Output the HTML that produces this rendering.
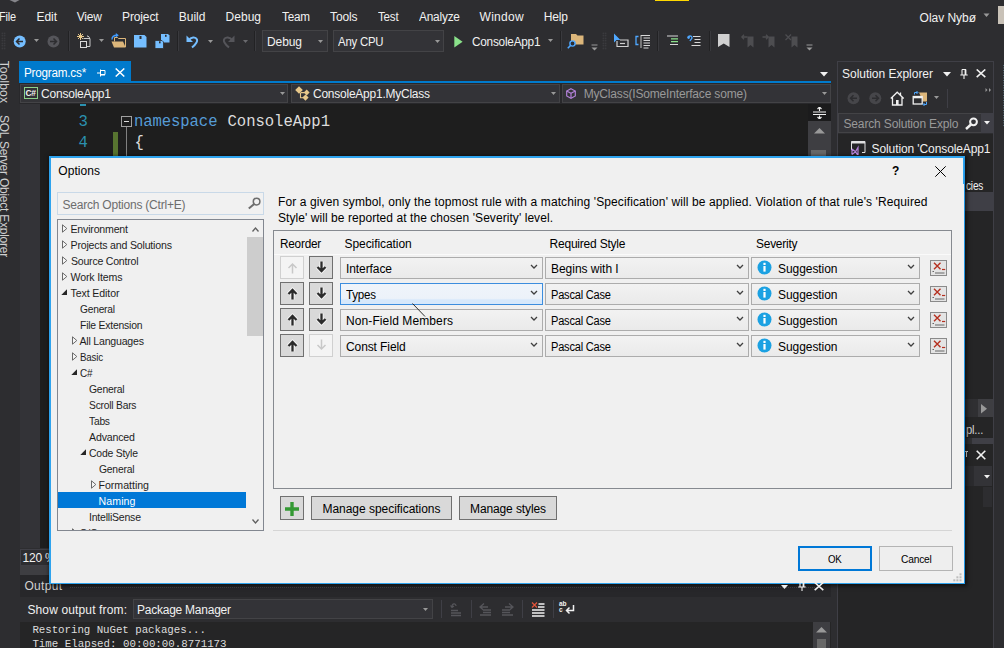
<!DOCTYPE html><html><head><meta charset="utf-8"><title>Options</title><style>
html,body{margin:0;padding:0;}
body{width:1004px;height:648px;overflow:hidden;background:#2D2D30;position:relative;font-family:"Liberation Sans",sans-serif;font-size:12px;}
div,span.t,svg{position:absolute;box-sizing:border-box;}
span.t{white-space:pre;}

</style></head><body>
<div style="left:655px;top:0px;width:34px;height:1px;background:#FFD800;"></div>
<svg style="left:9px;top:0px" width="11" height="3" viewBox="0 0 11 3"><path d="M0.500 0h10l-4.500 2.500z" fill="#85858A"/></svg>
<span class="t" style="left:-1px;top:9.00px;font-size:12px;line-height:16px;color:#F1F1F1;letter-spacing:-0.220px;transform:scaleX(0.9099);transform-origin:0 50%;">File</span>
<span class="t" style="left:36.6px;top:9.00px;font-size:12px;line-height:16px;color:#F1F1F1;letter-spacing:-0.096px;">Edit</span>
<span class="t" style="left:76.7px;top:9.00px;font-size:12px;line-height:16px;color:#F1F1F1;letter-spacing:-0.166px;">View</span>
<span class="t" style="left:122px;top:9.00px;font-size:12px;line-height:16px;color:#F1F1F1;letter-spacing:-0.127px;">Project</span>
<span class="t" style="left:178.8px;top:9.00px;font-size:12px;line-height:16px;color:#F1F1F1;letter-spacing:-0.022px;">Build</span>
<span class="t" style="left:225.6px;top:9.00px;font-size:12px;line-height:16px;color:#F1F1F1;letter-spacing:0.006px;">Debug</span>
<span class="t" style="left:282px;top:9.00px;font-size:12px;line-height:16px;color:#F1F1F1;letter-spacing:-0.220px;transform:scaleX(0.9762);transform-origin:0 50%;">Team</span>
<span class="t" style="left:330px;top:9.00px;font-size:12px;line-height:16px;color:#F1F1F1;letter-spacing:-0.104px;">Tools</span>
<span class="t" style="left:378px;top:9.00px;font-size:12px;line-height:16px;color:#F1F1F1;letter-spacing:-0.220px;transform:scaleX(0.9646);transform-origin:0 50%;">Test</span>
<span class="t" style="left:419px;top:9.00px;font-size:12px;line-height:16px;color:#F1F1F1;letter-spacing:-0.220px;transform:scaleX(0.9907);transform-origin:0 50%;">Analyze</span>
<span class="t" style="left:479.5px;top:9.00px;font-size:12px;line-height:16px;color:#F1F1F1;letter-spacing:0.303px;">Window</span>
<span class="t" style="left:543.8px;top:9.00px;font-size:12px;line-height:16px;color:#F1F1F1;letter-spacing:-0.162px;">Help</span>
<span class="t" style="left:919.6px;top:9.70px;font-size:12px;line-height:16px;color:#F1F1F1;letter-spacing:-0.036px;">Olav Nybø</span>
<svg style="left:983px;top:13px" width="8" height="5"><path d="M0.5 0.5h6l-3 3.5z" fill="#999"/></svg>
<div style="left:998px;top:6px;width:6px;height:18px;background:#C9C2B8;"></div>
<div style="left:262px;top:30px;width:66px;height:22px;background:#333337;border:1px solid #434346;"></div>
<span class="t" style="left:267px;top:33.50px;font-size:12px;line-height:16px;color:#F1F1F1;letter-spacing:-0.094px;">Debug</span>
<div style="left:333px;top:30px;width:111px;height:22px;background:#333337;border:1px solid #434346;"></div>
<span class="t" style="left:338px;top:33.50px;font-size:12px;line-height:16px;color:#F1F1F1;letter-spacing:-0.220px;transform:scaleX(0.9492);transform-origin:0 50%;">Any CPU</span>
<span class="t" style="left:471.5px;top:33.50px;font-size:12px;line-height:16px;color:#F1F1F1;letter-spacing:-0.220px;transform:scaleX(0.9805);transform-origin:0 50%;">ConsoleApp1</span>
<div style="left:20px;top:0px;width:400px;height:20px;transform-origin:0 0;transform:rotate(90deg)">
<span class="t" style="left:60.7px;top:8.40px;font-size:12px;line-height:16px;color:#D0D0D0;letter-spacing:0.138px;">Toolbox</span>
<span class="t" style="left:115.3px;top:8.40px;font-size:12px;line-height:16px;color:#D0D0D0;letter-spacing:-0.220px;transform:scaleX(0.9959);transform-origin:0 50%;">SQL Server Object Explorer</span>
</div>
<div style="left:19px;top:61px;width:112px;height:20px;background:#007ACC;"></div>
<div style="left:19px;top:81px;width:812px;height:2px;background:#007ACC;"></div>
<span class="t" style="left:23.8px;top:64.90px;font-size:12px;line-height:16px;color:#FFFFFF;letter-spacing:-0.220px;transform:scaleX(0.9744);transform-origin:0 50%;">Program.cs*</span>
<div style="left:19px;top:83px;width:812px;height:21px;background:#28282B;"></div>
<div style="left:20px;top:84px;width:268px;height:19px;background:#333337;border:1px solid #434346;"></div>
<div style="left:291px;top:84px;width:269px;height:19px;background:#333337;border:1px solid #434346;"></div>
<div style="left:562px;top:84px;width:269px;height:19px;background:#333337;border:1px solid #434346;"></div>
<span class="t" style="left:41px;top:86.00px;font-size:12px;line-height:16px;color:#F1F1F1;letter-spacing:-0.206px;">ConsoleApp1</span>
<span class="t" style="left:312.5px;top:86.00px;font-size:12px;line-height:16px;color:#F1F1F1;letter-spacing:-0.220px;transform:scaleX(0.9963);transform-origin:0 50%;">ConsoleApp1.MyClass</span>
<span class="t" style="left:583.7px;top:86.00px;font-size:12px;line-height:16px;color:#999999;letter-spacing:-0.176px;">MyClass(ISomeInterface some)</span>
<div style="left:20px;top:104px;width:811px;height:444px;background:#1E1E1E;"></div>
<div style="left:20px;top:104px;width:20px;height:444px;background:#333337;"></div>
<div style="left:112.5px;top:132px;width:5px;height:24px;background:#577430;"></div>
<span class="t" style="left:78.5px;top:112.30px;font-size:15.6px;line-height:20px;color:#2B91AF;font-family:'Liberation Mono', monospace;">3</span>
<span class="t" style="left:78.5px;top:133.30px;font-size:15.6px;line-height:20px;color:#2B91AF;font-family:'Liberation Mono', monospace;">4</span>
<span class="t" style="left:134px;top:112.30px;font-size:15.6px;line-height:20px;color:#569CD6;font-family:'Liberation Mono', monospace;letter-spacing:-0.092px;">namespace</span>
<span class="t" style="left:227.5px;top:112.30px;font-size:15.6px;line-height:20px;color:#DCDCDC;font-family:'Liberation Mono', monospace;letter-spacing:-0.044px;">ConsoleApp1</span>
<span class="t" style="left:134.5px;top:133.30px;font-size:15.6px;line-height:20px;color:#DCDCDC;font-family:'Liberation Mono', monospace;">{</span>
<svg style="left:121px;top:116px" width="12" height="42"><rect x="0.5" y="0.5" width="10" height="10" fill="#1E1E1E" stroke="#A0A0A0"/><path d="M3 5.5h5" stroke="#DCDCDC"/><path d="M5.5 11v31" stroke="#808080"/></svg>
<div style="left:808px;top:104px;width:23px;height:444px;background:#3E3E42;"></div>
<div style="left:808px;top:104px;width:23px;height:17px;background:#1B1B1C;"></div>
<div style="left:811px;top:150px;width:15px;height:10px;background:#686868;"></div>
<div style="left:20px;top:548px;width:811px;height:27px;background:#2D2D30;"></div>
<div style="left:20px;top:549px;width:30px;height:17px;background:#2D2D30;border:1px solid #3F3F46;"></div>
<span class="t" style="left:22.5px;top:549.80px;font-size:12px;line-height:16px;color:#F1F1F1;letter-spacing:-0.2px;">120 %</span>
<div style="left:20px;top:566px;width:811px;height:9px;background:#3E3E42;"></div>
<div style="left:20px;top:575px;width:811px;height:22px;background:#27272A;"></div>
<span class="t" style="left:24.4px;top:578.00px;font-size:12px;line-height:16px;color:#D0D0D0;letter-spacing:0.314px;">Output</span>
<div style="left:70px;top:587px;width:745px;height:1px;border-top:1px dotted #46464A;"></div>
<span class="t" style="left:27.4px;top:601.60px;font-size:12px;line-height:16px;color:#F1F1F1;letter-spacing:0.138px;">Show output from:</span>
<div style="left:133px;top:599px;width:300px;height:20px;background:#333337;border:1px solid #434346;"></div>
<span class="t" style="left:137px;top:601.60px;font-size:12px;line-height:16px;color:#F1F1F1;letter-spacing:-0.220px;transform:scaleX(0.9965);transform-origin:0 50%;">Package Manager</span>
<div style="left:20px;top:622px;width:811px;height:26px;background:#252526;"></div>
<span class="t" style="left:32.4px;top:622.50px;font-size:10.8px;line-height:14px;color:#DCDCDC;font-family:'Liberation Mono', monospace;letter-spacing:-0.052px;">Restoring NuGet packages...</span>
<span class="t" style="left:32.4px;top:636.70px;font-size:10.8px;line-height:14px;color:#DCDCDC;font-family:'Liberation Mono', monospace;letter-spacing:-0.007px;">Time Elapsed: 00:00:00.8771173</span>
<div style="left:813px;top:622px;width:17px;height:26px;background:#3E3E42;"></div>
<div style="left:817px;top:639px;width:9px;height:9px;background:#686868;"></div>
<div style="left:837px;top:61px;width:157px;height:600px;background:#252526;border:1px solid #3F3F46;"></div>
<div style="left:838px;top:62px;width:155px;height:72px;background:#2D2D30;"></div>
<span class="t" style="left:842px;top:66.00px;font-size:12px;line-height:16px;color:#F1F1F1;letter-spacing:-0.024px;">Solution Explorer</span>
<div style="left:838px;top:113px;width:155px;height:20px;background:#333337;border:1px solid #434346;"></div>
<div style="left:981px;top:113px;width:12px;height:20px;background:#3F3F46;"></div>
<span class="t" style="left:843.5px;top:115.80px;font-size:12px;line-height:16px;color:#999999;letter-spacing:-0.154px;">Search Solution Explo</span>
<span class="t" style="left:871.6px;top:141.00px;font-size:12px;line-height:16px;color:#F1F1F1;letter-spacing:-0.105px;width:122px;overflow:hidden;">Solution &#x27;ConsoleApp1</span>
<span class="t" style="left:965.7px;top:177.80px;font-size:12px;line-height:16px;color:#F1F1F1;letter-spacing:-0.220px;transform:scaleX(0.8364);transform-origin:0 50%;">cies</span>
<div style="left:964px;top:192px;width:29px;height:19px;background:#3F3F46;"></div>
<div style="left:964px;top:399px;width:14px;height:18px;background:#2F2F32;"></div>
<div style="left:978px;top:399px;width:15px;height:18px;background:#3E3E42;"></div>
<span class="t" style="left:966.4px;top:421.50px;font-size:12px;line-height:16px;color:#D0D0D0;letter-spacing:-0.220px;transform:scaleX(0.9370);transform-origin:0 50%;">pl...</span>
<div style="left:964px;top:438px;width:8px;height:6px;background:#303033;"></div>
<div style="left:972px;top:438px;width:21px;height:6px;background:#3F3F46;"></div>
<div style="left:964px;top:466px;width:10px;height:20px;background:#2B2B2E;"></div>
<div style="left:974px;top:466px;width:18px;height:20px;background:#333337;"></div>
<div style="left:983px;top:487px;width:9px;height:20px;background:#2D2D30;"></div>
<div style="left:965px;top:451px;width:3px;height:1px;background:#F1F1F1;"></div>
<div style="left:966px;top:451px;width:1px;height:6px;background:#F1F1F1;"></div>
<div style="left:49px;top:156px;width:916px;height:428px;background:#F0F0F0;border:2px solid #2EA3EE;border-right-width:1px;border-bottom-width:1px;border-right-color:#2496E3;box-shadow:1px 1px 4px 1px rgba(0,0,0,0.6)"></div>
<div style="left:963px;top:156px;width:1px;height:28px;background:#2EA3EE;"></div>
<span class="t" style="left:58.25px;top:162.50px;font-size:12px;line-height:16px;color:#000;letter-spacing:0.065px;">Options</span>
<span class="t" style="left:892px;top:163.00px;font-size:12px;line-height:16px;color:#000;font-weight:bold;">?</span>
<div style="left:57px;top:192px;width:207px;height:23px;background:#F1F1F1;border:1px solid #C9D9E8;"></div>
<span class="t" style="left:62.5px;top:196.50px;font-size:12px;line-height:16px;color:#6D6D6D;letter-spacing:-0.214px;">Search Options (Ctrl+E)</span>
<div style="left:57px;top:219px;width:207px;height:312px;background:#F0F0F0;border:1px solid #828790;"></div>
<div style="left:247px;top:220px;width:16px;height:310px;background:#F0F0F0;"></div>
<div style="left:247px;top:237px;width:16px;height:99px;background:#CDCDCD;"></div>
<div style="left:58px;top:492px;width:188px;height:16px;background:#0078D7;"></div>
<span class="t" style="left:70.5px;top:221.00px;font-size:10.6px;line-height:16px;color:#1E1E1E;letter-spacing:-0.198px;">Environment</span>
<span class="t" style="left:70.5px;top:237.00px;font-size:10.6px;line-height:16px;color:#1E1E1E;letter-spacing:-0.187px;">Projects and Solutions</span>
<span class="t" style="left:70.5px;top:253.00px;font-size:10.6px;line-height:16px;color:#1E1E1E;letter-spacing:-0.220px;transform:scaleX(0.9954);transform-origin:0 50%;">Source Control</span>
<span class="t" style="left:70.5px;top:269.00px;font-size:10.6px;line-height:16px;color:#1E1E1E;letter-spacing:-0.153px;">Work Items</span>
<span class="t" style="left:70.5px;top:285.00px;font-size:10.6px;line-height:16px;color:#1E1E1E;letter-spacing:-0.105px;">Text Editor</span>
<span class="t" style="left:79.5px;top:301.00px;font-size:10.6px;line-height:16px;color:#1E1E1E;letter-spacing:-0.220px;transform:scaleX(0.9620);transform-origin:0 50%;">General</span>
<span class="t" style="left:79.5px;top:317.00px;font-size:10.6px;line-height:16px;color:#1E1E1E;letter-spacing:-0.220px;transform:scaleX(0.9814);transform-origin:0 50%;">File Extension</span>
<span class="t" style="left:79.5px;top:333.00px;font-size:10.6px;line-height:16px;color:#1E1E1E;letter-spacing:-0.220px;">All Languages</span>
<span class="t" style="left:79.5px;top:349.00px;font-size:10.6px;line-height:16px;color:#1E1E1E;letter-spacing:-0.220px;transform:scaleX(0.9190);transform-origin:0 50%;">Basic</span>
<span class="t" style="left:79.5px;top:365.00px;font-size:10.6px;line-height:16px;color:#1E1E1E;letter-spacing:-0.220px;transform:scaleX(0.9380);transform-origin:0 50%;">C#</span>
<span class="t" style="left:89px;top:381.00px;font-size:10.6px;line-height:16px;color:#1E1E1E;letter-spacing:-0.220px;transform:scaleX(0.9785);transform-origin:0 50%;">General</span>
<span class="t" style="left:89px;top:397.00px;font-size:10.6px;line-height:16px;color:#1E1E1E;letter-spacing:-0.220px;transform:scaleX(0.9690);transform-origin:0 50%;">Scroll Bars</span>
<span class="t" style="left:89px;top:413.00px;font-size:10.6px;line-height:16px;color:#1E1E1E;letter-spacing:-0.220px;transform:scaleX(0.9664);transform-origin:0 50%;">Tabs</span>
<span class="t" style="left:89px;top:429.00px;font-size:10.6px;line-height:16px;color:#1E1E1E;letter-spacing:-0.161px;">Advanced</span>
<span class="t" style="left:89px;top:445.00px;font-size:10.6px;line-height:16px;color:#1E1E1E;letter-spacing:-0.220px;transform:scaleX(0.9830);transform-origin:0 50%;">Code Style</span>
<span class="t" style="left:98.5px;top:461.00px;font-size:10.6px;line-height:16px;color:#1E1E1E;letter-spacing:-0.220px;transform:scaleX(0.9757);transform-origin:0 50%;">General</span>
<span class="t" style="left:98.5px;top:477.00px;font-size:10.6px;line-height:16px;color:#1E1E1E;letter-spacing:-0.016px;">Formatting</span>
<span class="t" style="left:98.5px;top:493.00px;font-size:10.6px;line-height:16px;color:#FFFFFF;letter-spacing:0.097px;">Naming</span>
<span class="t" style="left:89px;top:509.00px;font-size:10.6px;line-height:16px;color:#1E1E1E;letter-spacing:-0.220px;transform:scaleX(0.9931);transform-origin:0 50%;">IntelliSense</span>
<div style="left:58px;top:525px;width:189px;height:5px;overflow:hidden"><span class="t" style="left:21.5px;top:0px;font-size:10.6px;line-height:16px;color:#1E1E1E">C/C++</span></div>
<span class="t" style="left:278px;top:194.00px;font-size:12px;line-height:16px;color:#000;letter-spacing:0.109px;">For a given symbol, only the topmost rule with a matching &#x27;Specification&#x27; will be applied. Violation of that rule&#x27;s &#x27;Required</span>
<span class="t" style="left:278px;top:209.50px;font-size:12px;line-height:16px;color:#000;letter-spacing:0.061px;">Style&#x27; will be reported at the chosen &#x27;Severity&#x27; level.</span>
<div style="left:273px;top:230px;width:679px;height:259px;background:#F0F0F0;border:1px solid #868A90;"></div>
<div style="left:274px;top:253.5px;width:677px;height:1px;background:#FAFAFA;"></div>
<span class="t" style="left:279.5px;top:235.70px;font-size:12px;line-height:16px;color:#000;letter-spacing:-0.220px;transform:scaleX(0.9800);transform-origin:0 50%;">Reorder</span>
<span class="t" style="left:344.5px;top:235.70px;font-size:12px;line-height:16px;color:#000;letter-spacing:-0.071px;">Specification</span>
<span class="t" style="left:549.5px;top:235.70px;font-size:12px;line-height:16px;color:#000;letter-spacing:-0.209px;">Required Style</span>
<span class="t" style="left:755.5px;top:235.70px;font-size:12px;line-height:16px;color:#000;letter-spacing:-0.220px;transform:scaleX(0.9924);transform-origin:0 50%;">Severity</span>
<div style="left:280px;top:256px;width:24px;height:23px;background:#F4F4F4;border:1px solid #D0D0D0;"></div>
<svg style="left:285.5px;top:260.5px" width="13" height="15"><path d="M6.5 3v9.5M2.5 7l4-4 4 4" stroke="#C8C8C8" stroke-width="1.5" fill="none"/></svg>
<div style="left:309px;top:256px;width:24px;height:23px;background:#D9D9D9;border:1px solid #707070;"></div>
<svg style="left:314.5px;top:259.5px" width="13" height="15"><path d="M6.5 1.5v9.5M2.5 7l4 4 4-4" stroke="#F4F4F4" stroke-width="4.2" fill="none" stroke-linejoin="miter"/><path d="M6.5 1.5v9.5M2.5 7l4 4 4-4" stroke="#2B2B2B" stroke-width="2.3" fill="none"/></svg>
<div style="left:340px;top:257px;width:203px;height:22px;border:1px solid #ACACAC;background:linear-gradient(#F2F2F2,#EAEAEA);"></div>
<svg style="left:530px;top:264px" width="8" height="6"><path d="M1 1l3 3 3-3" stroke="#404040" stroke-width="1.3" fill="none"/></svg>
<div style="left:545px;top:257px;width:204px;height:22px;border:1px solid #ACACAC;background:linear-gradient(#F2F2F2,#EAEAEA);"></div>
<svg style="left:736px;top:264px" width="8" height="6"><path d="M1 1l3 3 3-3" stroke="#404040" stroke-width="1.3" fill="none"/></svg>
<div style="left:751px;top:257px;width:169px;height:22px;border:1px solid #ACACAC;background:linear-gradient(#F2F2F2,#EAEAEA);"></div>
<svg style="left:907px;top:264px" width="8" height="6"><path d="M1 1l3 3 3-3" stroke="#404040" stroke-width="1.3" fill="none"/></svg>
<span class="t" style="left:346px;top:260.70px;font-size:12px;line-height:16px;color:#000;letter-spacing:-0.088px;">Interface</span>
<span class="t" style="left:551px;top:260.70px;font-size:12px;line-height:16px;color:#000;letter-spacing:-0.029px;">Begins with I</span>
<span class="t" style="left:778px;top:260.70px;font-size:12px;line-height:16px;color:#000;letter-spacing:-0.061px;">Suggestion</span>
<svg style="left:757px;top:260px" width="15" height="15"><circle cx="7.5" cy="7.5" r="7" fill="#1BA1E2"/><rect x="6.4" y="6" width="2.2" height="5.6" fill="#fff"/><rect x="6.4" y="2.8" width="2.2" height="2.2" fill="#fff"/></svg>
<div style="left:930px;top:260px;width:17px;height:16px;background:#E4E4E4;border:1px solid #8A8A8A;"></div>
<svg style="left:931px;top:261px" width="15" height="14"><path d="M3 1.700l6.500 6.500M9.500 1.700l-6.500 6.500" stroke="#B5301F" stroke-width="1.400"/><path d="M11 8.500h3.200" stroke="#B5301F" stroke-width="1.200"/><path d="M4 12h9.500M1.500 10.500h1.500" stroke="#666" stroke-width="1.100"/></svg>
<div style="left:280px;top:282px;width:24px;height:23px;background:#D9D9D9;border:1px solid #707070;"></div>
<svg style="left:285.5px;top:286.5px" width="13" height="15"><path d="M6.5 3v9.5M2.5 7l4-4 4 4" stroke="#F4F4F4" stroke-width="4.2" fill="none" stroke-linejoin="miter"/><path d="M6.5 3v9.5M2.5 7l4-4 4 4" stroke="#2B2B2B" stroke-width="2.3" fill="none"/></svg>
<div style="left:309px;top:282px;width:24px;height:23px;background:#D9D9D9;border:1px solid #707070;"></div>
<svg style="left:314.5px;top:285.5px" width="13" height="15"><path d="M6.5 1.5v9.5M2.5 7l4 4 4-4" stroke="#F4F4F4" stroke-width="4.2" fill="none" stroke-linejoin="miter"/><path d="M6.5 1.5v9.5M2.5 7l4 4 4-4" stroke="#2B2B2B" stroke-width="2.3" fill="none"/></svg>
<div style="left:340px;top:283px;width:203px;height:22px;border:1px solid #3C8DDE;background:linear-gradient(#EFF4FA 0%,#ECF2F9 72%,#D6E8FB 80%,#D6E8FB 100%);"></div>
<svg style="left:530px;top:290px" width="8" height="6"><path d="M1 1l3 3 3-3" stroke="#404040" stroke-width="1.3" fill="none"/></svg>
<div style="left:545px;top:283px;width:204px;height:22px;border:1px solid #ACACAC;background:linear-gradient(#F2F2F2,#EAEAEA);"></div>
<svg style="left:736px;top:290px" width="8" height="6"><path d="M1 1l3 3 3-3" stroke="#404040" stroke-width="1.3" fill="none"/></svg>
<div style="left:751px;top:283px;width:169px;height:22px;border:1px solid #ACACAC;background:linear-gradient(#F2F2F2,#EAEAEA);"></div>
<svg style="left:907px;top:290px" width="8" height="6"><path d="M1 1l3 3 3-3" stroke="#404040" stroke-width="1.3" fill="none"/></svg>
<span class="t" style="left:346px;top:286.70px;font-size:12px;line-height:16px;color:#000;letter-spacing:-0.220px;transform:scaleX(0.9635);transform-origin:0 50%;">Types</span>
<span class="t" style="left:551px;top:286.70px;font-size:12px;line-height:16px;color:#000;letter-spacing:-0.220px;transform:scaleX(0.9206);transform-origin:0 50%;">Pascal Case</span>
<span class="t" style="left:778px;top:286.70px;font-size:12px;line-height:16px;color:#000;letter-spacing:-0.061px;">Suggestion</span>
<svg style="left:757px;top:286px" width="15" height="15"><circle cx="7.5" cy="7.5" r="7" fill="#1BA1E2"/><rect x="6.4" y="6" width="2.2" height="5.6" fill="#fff"/><rect x="6.4" y="2.8" width="2.2" height="2.2" fill="#fff"/></svg>
<div style="left:930px;top:286px;width:17px;height:16px;background:#E4E4E4;border:1px solid #8A8A8A;"></div>
<svg style="left:931px;top:287px" width="15" height="14"><path d="M3 1.700l6.500 6.500M9.500 1.700l-6.500 6.500" stroke="#B5301F" stroke-width="1.400"/><path d="M11 8.500h3.200" stroke="#B5301F" stroke-width="1.200"/><path d="M4 12h9.500M1.500 10.500h1.500" stroke="#666" stroke-width="1.100"/></svg>
<div style="left:280px;top:308px;width:24px;height:23px;background:#D9D9D9;border:1px solid #707070;"></div>
<svg style="left:285.5px;top:312.5px" width="13" height="15"><path d="M6.5 3v9.5M2.5 7l4-4 4 4" stroke="#F4F4F4" stroke-width="4.2" fill="none" stroke-linejoin="miter"/><path d="M6.5 3v9.5M2.5 7l4-4 4 4" stroke="#2B2B2B" stroke-width="2.3" fill="none"/></svg>
<div style="left:309px;top:308px;width:24px;height:23px;background:#D9D9D9;border:1px solid #707070;"></div>
<svg style="left:314.5px;top:311.5px" width="13" height="15"><path d="M6.5 1.5v9.5M2.5 7l4 4 4-4" stroke="#F4F4F4" stroke-width="4.2" fill="none" stroke-linejoin="miter"/><path d="M6.5 1.5v9.5M2.5 7l4 4 4-4" stroke="#2B2B2B" stroke-width="2.3" fill="none"/></svg>
<div style="left:340px;top:309px;width:203px;height:22px;border:1px solid #ACACAC;background:linear-gradient(#F2F2F2,#EAEAEA);"></div>
<svg style="left:530px;top:316px" width="8" height="6"><path d="M1 1l3 3 3-3" stroke="#404040" stroke-width="1.3" fill="none"/></svg>
<div style="left:545px;top:309px;width:204px;height:22px;border:1px solid #ACACAC;background:linear-gradient(#F2F2F2,#EAEAEA);"></div>
<svg style="left:736px;top:316px" width="8" height="6"><path d="M1 1l3 3 3-3" stroke="#404040" stroke-width="1.3" fill="none"/></svg>
<div style="left:751px;top:309px;width:169px;height:22px;border:1px solid #ACACAC;background:linear-gradient(#F2F2F2,#EAEAEA);"></div>
<svg style="left:907px;top:316px" width="8" height="6"><path d="M1 1l3 3 3-3" stroke="#404040" stroke-width="1.3" fill="none"/></svg>
<span class="t" style="left:346px;top:312.70px;font-size:12px;line-height:16px;color:#000;letter-spacing:0.102px;">Non-Field Members</span>
<span class="t" style="left:551px;top:312.70px;font-size:12px;line-height:16px;color:#000;letter-spacing:-0.220px;transform:scaleX(0.9206);transform-origin:0 50%;">Pascal Case</span>
<span class="t" style="left:778px;top:312.70px;font-size:12px;line-height:16px;color:#000;letter-spacing:-0.061px;">Suggestion</span>
<svg style="left:757px;top:312px" width="15" height="15"><circle cx="7.5" cy="7.5" r="7" fill="#1BA1E2"/><rect x="6.4" y="6" width="2.2" height="5.6" fill="#fff"/><rect x="6.4" y="2.8" width="2.2" height="2.2" fill="#fff"/></svg>
<div style="left:930px;top:312px;width:17px;height:16px;background:#E4E4E4;border:1px solid #8A8A8A;"></div>
<svg style="left:931px;top:313px" width="15" height="14"><path d="M3 1.700l6.500 6.500M9.500 1.700l-6.500 6.500" stroke="#B5301F" stroke-width="1.400"/><path d="M11 8.500h3.200" stroke="#B5301F" stroke-width="1.200"/><path d="M4 12h9.500M1.500 10.500h1.500" stroke="#666" stroke-width="1.100"/></svg>
<div style="left:280px;top:334px;width:24px;height:23px;background:#D9D9D9;border:1px solid #707070;"></div>
<svg style="left:285.5px;top:338.5px" width="13" height="15"><path d="M6.5 3v9.5M2.5 7l4-4 4 4" stroke="#F4F4F4" stroke-width="4.2" fill="none" stroke-linejoin="miter"/><path d="M6.5 3v9.5M2.5 7l4-4 4 4" stroke="#2B2B2B" stroke-width="2.3" fill="none"/></svg>
<div style="left:309px;top:334px;width:24px;height:23px;background:#F4F4F4;border:1px solid #D0D0D0;"></div>
<svg style="left:314.5px;top:337.5px" width="13" height="15"><path d="M6.5 1.5v9.5M2.5 7l4 4 4-4" stroke="#C8C8C8" stroke-width="1.5" fill="none"/></svg>
<div style="left:340px;top:335px;width:203px;height:22px;border:1px solid #ACACAC;background:linear-gradient(#F2F2F2,#EAEAEA);"></div>
<svg style="left:530px;top:342px" width="8" height="6"><path d="M1 1l3 3 3-3" stroke="#404040" stroke-width="1.3" fill="none"/></svg>
<div style="left:545px;top:335px;width:204px;height:22px;border:1px solid #ACACAC;background:linear-gradient(#F2F2F2,#EAEAEA);"></div>
<svg style="left:736px;top:342px" width="8" height="6"><path d="M1 1l3 3 3-3" stroke="#404040" stroke-width="1.3" fill="none"/></svg>
<div style="left:751px;top:335px;width:169px;height:22px;border:1px solid #ACACAC;background:linear-gradient(#F2F2F2,#EAEAEA);"></div>
<svg style="left:907px;top:342px" width="8" height="6"><path d="M1 1l3 3 3-3" stroke="#404040" stroke-width="1.3" fill="none"/></svg>
<span class="t" style="left:346px;top:338.70px;font-size:12px;line-height:16px;color:#000;letter-spacing:-0.100px;">Const Field</span>
<span class="t" style="left:551px;top:338.70px;font-size:12px;line-height:16px;color:#000;letter-spacing:-0.220px;transform:scaleX(0.9206);transform-origin:0 50%;">Pascal Case</span>
<span class="t" style="left:778px;top:338.70px;font-size:12px;line-height:16px;color:#000;letter-spacing:-0.061px;">Suggestion</span>
<svg style="left:757px;top:338px" width="15" height="15"><circle cx="7.5" cy="7.5" r="7" fill="#1BA1E2"/><rect x="6.4" y="6" width="2.2" height="5.6" fill="#fff"/><rect x="6.4" y="2.8" width="2.2" height="2.2" fill="#fff"/></svg>
<div style="left:930px;top:338px;width:17px;height:16px;background:#E4E4E4;border:1px solid #8A8A8A;"></div>
<svg style="left:931px;top:339px" width="15" height="14"><path d="M3 1.700l6.500 6.500M9.500 1.700l-6.500 6.500" stroke="#B5301F" stroke-width="1.400"/><path d="M11 8.500h3.200" stroke="#B5301F" stroke-width="1.200"/><path d="M4 12h9.500M1.500 10.500h1.500" stroke="#666" stroke-width="1.100"/></svg>
<div style="left:280px;top:496px;width:24px;height:24px;background:#D9D9D9;border:1px solid #707070;"></div>
<svg style="left:285px;top:501.5px" width="14" height="14"><path d="M7 0v14M0 7h14" stroke="#339933" stroke-width="3.4"/></svg>
<div style="left:311px;top:496px;width:141px;height:24px;background:#D9D9D9;border:1px solid #707070;"></div>
<span class="t" style="left:322.5px;top:501.00px;font-size:12px;line-height:16px;color:#000;letter-spacing:-0.037px;">Manage specifications</span>
<div style="left:459px;top:496px;width:98px;height:24px;background:#D9D9D9;border:1px solid #707070;"></div>
<span class="t" style="left:470px;top:501.00px;font-size:12px;line-height:16px;color:#000;letter-spacing:-0.115px;">Manage styles</span>
<div style="left:273px;top:530px;width:679px;height:1px;background:#D5D5D5;"></div>
<div style="left:798px;top:545.5px;width:74px;height:25px;background:#EDEDED;border:2px solid #0078D7;"></div>
<span class="t" style="left:827.7px;top:551.00px;font-size:11px;line-height:16px;color:#000;letter-spacing:-0.220px;transform:scaleX(0.8798);transform-origin:0 50%;">OK</span>
<div style="left:879px;top:545.5px;width:74px;height:25px;background:#EEEEEE;border:1px solid #B4B4B4;"></div>
<span class="t" style="left:900.7px;top:551.00px;font-size:11px;line-height:16px;color:#000;letter-spacing:-0.220px;transform:scaleX(0.9291);transform-origin:0 50%;">Cancel</span>
<div style="left:1px;top:32px;width:5px;height:18px;background-image:radial-gradient(circle,#46464A 0.6px,transparent 0.9px);background-size:2.5px 2.5px;opacity:.9"></div>
<svg style="left:13px;top:34.5px" width="14" height="14" viewBox="0 0 14 14"><circle cx="6.7" cy="6.5" r="6" fill="#75BEFF"/><path d="M10 6.500H4M6.500 3.500L3.500 6.500l3 3" stroke="#2D2D30" stroke-width="1.5" fill="none"/></svg>
<svg style="left:34px;top:39.0px" width="6" height="4" viewBox="0 0 6 4"><path d="M0 0h5l-2.5 3.0z" fill="#999999"/></svg>
<svg style="left:47px;top:34.5px" width="14" height="14" viewBox="0 0 14 14"><circle cx="6.500" cy="6.500" r="6" fill="#55555A"/><path d="M3 6.500h6M6.500 3.500l3 3-3 3" stroke="#2D2D30" stroke-width="1.500" fill="none"/></svg>
<div style="left:68px;top:31px;width:1px;height:20px;background:#222224;"></div>
<div style="left:69px;top:31px;width:1px;height:20px;background:#3A3A3E;"></div>
<svg style="left:77px;top:33px" width="15" height="16" viewBox="0 0 15 16"><path d="M6.500 5.500h6.500v8h-3" stroke="#C8C8C8" fill="none"/><rect x="3.500" y="8.500" width="6" height="6" stroke="#D8D8D8" fill="#2D2D30"/><path d="M3.500 0v7M0 3.500h7M1 1l5 5M6 1l-5 5" stroke="#E8C88A" stroke-width="1"/><path d="M10 3c1.500 0 2.500 1 2.500 2.500" stroke="#E0E0E0" fill="none"/></svg>
<svg style="left:99px;top:39.0px" width="6" height="4" viewBox="0 0 6 4"><path d="M0 0h5l-2.5 3.0z" fill="#999999"/></svg>
<svg style="left:111px;top:33px" width="16" height="16" viewBox="0 0 16 16"><path d="M3.500 8.500V4.500h3l1 1h7v8.500" stroke="#DCB67A" stroke-width="1" fill="none"/><path d="M0.500 8.500h11.500l2.700 6H3z" fill="#DCB67A"/><path d="M1 6.500c0-3 2-4.300 5-4.300" stroke="#3F9BFF" stroke-width="1.400" fill="none"/><path d="M4.800 0l3 2.200-3 2.300z" fill="#3F9BFF"/></svg>
<svg style="left:134px;top:35px" width="13" height="13" viewBox="0 0 13 13"><path d="M0 0h10.500L12.500 2v10.500H0z" fill="#75BEFF"/><rect x="5.500" y="1" width="2" height="3" fill="#2D2D30"/></svg>
<svg style="left:155px;top:33.5px" width="15" height="15" viewBox="0 0 15 15"><path d="M6 0h7L14.500 1.500v7H6z" fill="#75BEFF"/><rect x="10" y="0.800" width="1.600" height="2" fill="#2D2D30"/><path d="M0 6.500h7L8.500 8v6.500H0z" fill="#75BEFF" stroke="#2D2D30" stroke-width="0.800"/><rect x="4" y="7.300" width="1.600" height="2" fill="#2D2D30"/></svg>
<div style="left:177px;top:31px;width:1px;height:20px;background:#222224;"></div>
<div style="left:178px;top:31px;width:1px;height:20px;background:#3A3A3E;"></div>
<svg style="left:185px;top:33.5px" width="15" height="15" viewBox="0 0 15 15"><path d="M3.500 6.500C6 3 10.500 2.500 12 5.500c1 2.500-1.500 5-5 8" stroke="#75BEFF" stroke-width="2" fill="none"/><path d="M1.500 1.500v6.500h6.500z" fill="#75BEFF"/></svg>
<svg style="left:208px;top:39.5px" width="6" height="4" viewBox="0 0 6 4"><path d="M0 0h5l-2.5 3.0z" fill="#999999"/></svg>
<svg style="left:221px;top:33.5px" width="15" height="15" viewBox="0 0 15 15"><path d="M11.500 6.500C9 3 4.500 2.500 3 5.500c-1 2.500 1.500 5 5 8" stroke="#55555A" stroke-width="2" fill="none"/><path d="M13.500 1.500v6.500h-6.500z" fill="#55555A"/></svg>
<svg style="left:243px;top:39.5px" width="6" height="4" viewBox="0 0 6 4"><path d="M0 0h5l-2.5 3.0z" fill="#6A6A6E"/></svg>
<div style="left:254px;top:31px;width:1px;height:20px;background:#222224;"></div>
<div style="left:255px;top:31px;width:1px;height:20px;background:#3A3A3E;"></div>
<svg style="left:318px;top:39.5px" width="6" height="4" viewBox="0 0 6 4"><path d="M0 0h5l-2.5 3.0z" fill="#999999"/></svg>
<svg style="left:434.5px;top:39.5px" width="6" height="4" viewBox="0 0 6 4"><path d="M0 0h5l-2.5 3.0z" fill="#999999"/></svg>
<svg style="left:454px;top:35.5px" width="9" height="12" viewBox="0 0 9 12"><path d="M0.300 0v11.400L8.600 5.700z" fill="#8AE28A"/></svg>
<svg style="left:548px;top:39.0px" width="6" height="4" viewBox="0 0 6 4"><path d="M0 0h5l-2.5 3.0z" fill="#999999"/></svg>
<div style="left:560px;top:31px;width:1px;height:20px;background:#222224;"></div>
<div style="left:561px;top:31px;width:1px;height:20px;background:#3A3A3E;"></div>
<svg style="left:567px;top:33px" width="18" height="16" viewBox="0 0 18 16"><path d="M4 1h5l1.500 1.500H16.500v9H4z" fill="#DCB67A"/><circle cx="5.500" cy="10.500" r="2.600" fill="#2D2D30" stroke="#4FA8FF" stroke-width="1.400"/><path d="M3.500 12.500L0.800 15.200" stroke="#4FA8FF" stroke-width="1.600"/></svg>
<svg style="left:590.5px;top:43.5px" width="8" height="7" viewBox="0 0 8 7"><path d="M0.500 1h6" stroke="#999"/><path d="M0.500 3.500h6l-3 3z" fill="#999"/></svg>
<div style="left:602px;top:32px;width:5px;height:18px;background-image:radial-gradient(circle,#46464A 0.6px,transparent 0.9px);background-size:2.5px 2.5px;opacity:.9"></div>
<svg style="left:613px;top:33px" width="16" height="15" viewBox="0 0 16 15"><path d="M1 0.500v9l2.500-2.500h4z" fill="#4FA8FF"/><path d="M4 8v5.500h11v-6.500H7" stroke="#D0D0D0" stroke-width="1.200" fill="none"/><path d="M7 10.500h5" stroke="#D0D0D0" stroke-width="1.200"/></svg>
<svg style="left:635px;top:33.5px" width="16" height="15" viewBox="0 0 16 15"><path d="M3.500 2.500h-2.500v8h2.500" stroke="#4FA8FF" stroke-width="1.300" fill="none"/><path d="M6 1v13" stroke="#999" stroke-width="1.400"/><path d="M6 1.500h9M8.500 4h6.500M8.500 6.500h6.500M8.500 9h6.500M8.500 11.500h6.500M8.500 14h5" stroke="#D8D8D8" stroke-width="1.100"/></svg>
<div style="left:657px;top:31px;width:1px;height:20px;background:#222224;"></div>
<div style="left:658px;top:31px;width:1px;height:20px;background:#3A3A3E;"></div>
<svg style="left:667px;top:35px" width="12" height="12" viewBox="0 0 12 12"><path d="M0 1h11M3 9.500h8" stroke="#D8D8D8" stroke-width="1.200"/><path d="M4 3.800h7M4 6.600h7" stroke="#8AE28A" stroke-width="1.200"/></svg>
<svg style="left:686.5px;top:35px" width="14" height="12" viewBox="0 0 14 12"><path d="M1 2.500c0.500-2 4-2 4 0.200 0 1.300-1.500 1.800-2 3.300" stroke="#4FA8FF" stroke-width="1.400" fill="none"/><circle cx="1.600" cy="2.600" r="1.300" fill="#4FA8FF"/><path d="M6 1.500h7.500M7.500 4.500h6M7.500 7.500h6M4.500 10.500h9" stroke="#D8D8D8" stroke-width="1.200"/></svg>
<div style="left:709px;top:31px;width:1px;height:20px;background:#222224;"></div>
<div style="left:710px;top:31px;width:1px;height:20px;background:#3A3A3E;"></div>
<svg style="left:718px;top:34px" width="12" height="14" viewBox="0 0 12 14"><path d="M0 0h11.500v13L5.750 9.500 0 13z" fill="#D0D0D0"/></svg>
<svg style="left:741px;top:34px" width="14" height="14" viewBox="0 0 14 14"><path d="M6.500 2.500h6v11l-3-2.500-3 2.500z" fill="#4D4D50"/><path d="M0.500 3h6M3 0.800L0.800 3 3 5.200" stroke="#4D4D50" stroke-width="1.300" fill="none"/></svg>
<svg style="left:762px;top:34px" width="14" height="14" viewBox="0 0 14 14"><path d="M6.500 2.500h6v11l-3-2.500-3 2.500z" fill="#4D4D50"/><path d="M0.500 3h6M4 0.800L6.200 3 4 5.200" stroke="#4D4D50" stroke-width="1.300" fill="none"/></svg>
<svg style="left:785px;top:34px" width="14" height="14" viewBox="0 0 14 14"><path d="M6.500 2.500h6v11l-3-2.500-3 2.500z" fill="#4D4D50"/><path d="M0.500 0.500l5.500 5.500M6 0.500l-5.500 5.500" stroke="#4D4D50" stroke-width="1.300" fill="none"/></svg>
<svg style="left:805.5px;top:43.5px" width="8" height="7" viewBox="0 0 8 7"><path d="M0.500 1h6" stroke="#999"/><path d="M0.500 3.500h6l-3 3z" fill="#999"/></svg>
<svg style="left:97px;top:68.5px" width="9" height="8" viewBox="0 0 9 8"><path d="M0 4h3.500M3.500 0.500v7M3.500 1.500h4.500v4h-4.500M3.500 6h4.500" stroke="#fff" stroke-width="1" fill="none"/></svg>
<svg style="left:115px;top:68px" width="10" height="9" viewBox="0 0 10 9"><path d="M0.700 0.500l8.600 8M9.300 0.500l-8.600 8" stroke="#fff" stroke-width="1.500"/></svg>
<svg style="left:820px;top:71.5px" width="9" height="5" viewBox="0 0 9 5"><path d="M0 0h8l-4 4.500z" fill="#F1F1F1"/></svg>
<div style="left:24px;top:87px;width:14px;height:12px;background:#333337;border:1px solid #8DD28A;"></div>
<span class="t" style="left:25.5px;top:87.5px;font-size:8.5px;line-height:11px;color:#F1F1F1;font-weight:bold;letter-spacing:-0.4px">C#</span>
<svg style="left:279.5px;top:92.1px" width="6" height="4" viewBox="0 0 6 4"><path d="M0 0h5l-2.5 3.0z" fill="#999999"/></svg>
<svg style="left:550.5px;top:92.1px" width="6" height="4" viewBox="0 0 6 4"><path d="M0 0h5l-2.5 3.0z" fill="#999999"/></svg>
<svg style="left:822px;top:92.1px" width="6" height="4" viewBox="0 0 6 4"><path d="M0 0h5l-2.5 3.0z" fill="#999999"/></svg>
<svg style="left:295px;top:85.5px" width="15" height="15" viewBox="0 0 15 15"><path d="M4 0.200l3.800 3.800L4 7.800 0.200 4z" fill="#E8C88A"/><path d="M11.700 3.600l2.900 2.900-2.900 2.900-2.900-2.900z" fill="#E8C88A"/><path d="M10.500 8.500l3.100 3.100-3.100 3.100-3.100-3.100z" fill="#E8C88A"/><path d="M5.500 7v4.700h2.500M5.500 6.600h4" stroke="#E8C88A" stroke-width="1.100" fill="none"/></svg>
<svg style="left:566px;top:87.5px" width="10" height="11" viewBox="0 0 10 11"><path d="M5 0.700L9.300 3v5L5 10.300 0.700 8V3z" stroke="#B180D7" stroke-width="1.200" fill="none"/><path d="M0.700 3L5 5.300 9.300 3M5 5.300v5" stroke="#B180D7" stroke-width="1.200" fill="none"/></svg>
<div style="left:79.5px;top:104px;width:6px;height:2px;background:#2B91AF;"></div>
<svg style="left:812px;top:107px" width="15" height="12" viewBox="0 0 15 12"><path d="M1 5h13M1 7.500h13M7.500 0.500v3.500M7.500 8.500v3.500M5.500 2l2-2 2 2M5.500 10l2 2 2-2" stroke="#F1F1F1" stroke-width="1.100" fill="none"/></svg>
<svg style="left:814px;top:128px" width="11" height="6" viewBox="0 0 11 6"><path d="M0 5.500L5.500 0 11 5.500z" fill="#999"/></svg>
<svg style="left:943px;top:71.5px" width="9" height="5" viewBox="0 0 9 5"><path d="M0 0h8l-4 4.500z" fill="#F1F1F1"/></svg>
<svg style="left:960px;top:68.5px" width="8" height="10" viewBox="0 0 8 10"><path d="M2 0.500h4M2 0.500v5.500M0.300 6h7.400M4 6v4" stroke="#F1F1F1" stroke-width="1.100" fill="none"/><path d="M5.500 0.500v5.500" stroke="#F1F1F1" stroke-width="1.800"/></svg>
<svg style="left:976px;top:69px" width="10" height="9" viewBox="0 0 10 9"><path d="M0.700 0.500l8.600 7.600M9.300 0.500l-8.600 7.600" stroke="#F1F1F1" stroke-width="1.600"/></svg>
<svg style="left:846.5px;top:92px" width="13" height="13" viewBox="0 0 13 13"><circle cx="6.500" cy="6.200" r="6" fill="#46464A"/><path d="M10 6.200H3.500M6.500 3.200l-3 3 3 3" stroke="#2D2D30" stroke-width="1.500" fill="none"/></svg>
<svg style="left:868.5px;top:92px" width="13" height="13" viewBox="0 0 13 13"><circle cx="6.300" cy="6.200" r="6" fill="#46464A"/><path d="M3 6.200h6.500M6.500 3.200l3 3-3 3" stroke="#2D2D30" stroke-width="1.500" fill="none"/></svg>
<svg style="left:890px;top:90.5px" width="15" height="15" viewBox="0 0 15 15"><path d="M0.800 7.500L7.200 1.200l6.500 6.300M2.500 6.500v7.500h9.500v-7.500M10.500 4V1.500" stroke="#F1F1F1" stroke-width="1.300" fill="none"/><rect x="6" y="9" width="2.600" height="5" fill="#F1F1F1"/></svg>
<svg style="left:912px;top:90.5px" width="17" height="15" viewBox="0 0 17 15"><path d="M7 1.500h8v9h-4" fill="#DCB67A"/><rect x="1.200" y="5.500" width="9" height="7.500" fill="#2D2D30" stroke="#F1F1F1" stroke-width="1.300"/><path d="M1.200 6.500h9" stroke="#F1F1F1" stroke-width="1.600"/><path d="M2.500 3.500v-2h3M4.500 0l1.500 1.500L4.500 3" stroke="#4FA8FF" fill="none"/><path d="M14.500 11v2.500h-3M12.500 12l-1.500 1.500 1.500 1.500" stroke="#4FA8FF" fill="none"/></svg>
<svg style="left:934px;top:96.1px" width="6" height="4" viewBox="0 0 6 4"><path d="M0 0h5l-2.5 3.0z" fill="#999999"/></svg>
<div style="left:947px;top:88.5px;width:1px;height:19px;background:#3F3F46;"></div>
<svg style="left:984.5px;top:88px" width="7" height="5" viewBox="0 0 7 5"><path d="M0.500 0l2 2-2 2zM4 0l2 2-2 2z" fill="#999"/></svg>
<svg style="left:965px;top:117px" width="14" height="13" viewBox="0 0 14 13"><circle cx="8.500" cy="4.800" r="3.400" stroke="#F1F1F1" stroke-width="2" fill="none"/><path d="M6 7.500L1 12" stroke="#F1F1F1" stroke-width="2.400"/></svg>
<svg style="left:983.5px;top:121px" width="7" height="4" viewBox="0 0 7 4"><path d="M0 0h6l-3 3.500z" fill="#F1F1F1"/></svg>
<svg style="left:850.5px;top:141px" width="15" height="14" viewBox="0 0 15 14"><path d="M0.500 9V0.500h13.500v11h-3" stroke="#E0E0E0" stroke-width="1" fill="none"/><path d="M0.500 1.500h13.500" stroke="#E0E0E0" stroke-width="2"/><path d="M1 8l3.500 2.800L1 13.500M1 8l0 5.500M7 6.500v8L4.500 10.800z" stroke="#B180D7" stroke-width="1.200" fill="none"/></svg>
<div style="left:1003px;top:65px;width:1px;height:62px;background-image:linear-gradient(#7DA8B8 50%,transparent 50%);background-size:1px 2.500px;opacity:.55"></div>
<svg style="left:980.5px;top:403.5px" width="7" height="10" viewBox="0 0 7 10"><path d="M0 0l6 4.800L0 9.600z" fill="#999"/></svg>
<svg style="left:976px;top:450px" width="10" height="10" viewBox="0 0 10 10"><path d="M0.700 0.700l8.600 8.600M9.300 0.700l-8.600 8.600" stroke="#F1F1F1" stroke-width="1.600"/></svg>
<svg style="left:984px;top:475px" width="7" height="4" viewBox="0 0 7 4"><path d="M0 0h6l-3 3.500z" fill="#F1F1F1"/></svg>
<svg style="left:780.5px;top:584.5px" width="8" height="5" viewBox="0 0 8 5"><path d="M0 0h7l-3.500 4z" fill="#F1F1F1"/></svg>
<svg style="left:797.5px;top:581px" width="8" height="10" viewBox="0 0 8 10"><path d="M2 0.500h4M2 0.500v5.500M0.300 6h7.400M4 6v4" stroke="#F1F1F1" stroke-width="1.100" fill="none"/><path d="M5.500 0.500v5.500" stroke="#F1F1F1" stroke-width="1.800"/></svg>
<svg style="left:813.5px;top:582px" width="10" height="9" viewBox="0 0 10 9"><path d="M0.700 0.500l8.600 7.600M9.300 0.500l-8.600 7.600" stroke="#F1F1F1" stroke-width="1.600"/></svg>
<svg style="left:423px;top:607.5px" width="6" height="4" viewBox="0 0 6 4"><path d="M0 0h5l-2.5 3.0z" fill="#999999"/></svg>
<div style="left:440.5px;top:600px;width:1px;height:18px;background:#3F3F46;"></div>
<div style="left:470.5px;top:600px;width:1px;height:18px;background:#3F3F46;"></div>
<div style="left:522px;top:600px;width:1px;height:18px;background:#3F3F46;"></div>
<div style="left:553px;top:600px;width:1px;height:18px;background:#3F3F46;"></div>
<svg style="left:448px;top:602px" width="15" height="15" viewBox="0 0 15 15"><path d="M4 4.500C4 1 8 1 8 4M2.500 3.500L4 5.500l2-1.500" stroke="#55555A" stroke-width="1.200" fill="none"/><path d="M3 8.500h7M3 11h10M3 13.500h10" stroke="#55555A" stroke-width="1.400"/></svg>
<svg style="left:479px;top:603px" width="13" height="13" viewBox="0 0 13 13"><path d="M5 0.500L1 4l4 3.500M1 4h8" stroke="#55555A" stroke-width="1.300" fill="none"/><path d="M4 9.500h8M1 12h11M5 7h7" stroke="#55555A" stroke-width="1.300"/></svg>
<svg style="left:501px;top:603px" width="13" height="13" viewBox="0 0 13 13"><path d="M8 0.500L12 4 8 7.500M12 4H4" stroke="#55555A" stroke-width="1.300" fill="none"/><path d="M1 9.500h8M1 12h11M1 7h7" stroke="#55555A" stroke-width="1.300"/></svg>
<svg style="left:531px;top:602px" width="14" height="15" viewBox="0 0 14 15"><path d="M1 0.500l5 5M6 0.500l-5 5" stroke="#E0533A" stroke-width="1.300"/><path d="M7.500 2h6M7 5h6.500M1 8h12.500M1 11h12.500M1 14h12.500" stroke="#F1F1F1" stroke-width="1.500"/></svg>
<svg style="left:559px;top:603px" width="16" height="13" viewBox="0 0 16 13"><path d="M14.500 2v5.500H8M10.500 4.500L7.500 7.500l3 3" stroke="#F1F1F1" stroke-width="1.500" fill="none"/></svg>
<span class="t" style="left:559px;top:601px;font-size:6.500px;line-height:6px;color:#F1F1F1;font-weight:bold">ab</span><span class="t" style="left:559px;top:607px;font-size:6.500px;line-height:6px;color:#F1F1F1;font-weight:bold">c</span>
<svg style="left:816px;top:626.5px" width="11" height="6" viewBox="0 0 11 6"><path d="M0 5.500L5.500 0 11 5.500z" fill="#999"/></svg>
<svg style="left:247px;top:196px" width="15" height="15" viewBox="0 0 15 15"><circle cx="9.600" cy="5.600" r="3.300" stroke="#6D6D6D" stroke-width="1.500" fill="none"/><path d="M7.200 8L1.800 12.600" stroke="#6D6D6D" stroke-width="2"/></svg>
<svg style="left:934.5px;top:165.5px" width="11" height="11" viewBox="0 0 11 11"><path d="M0.300 0.300l10.400 10.400M10.700 0.300L0.300 10.700" stroke="#000" stroke-width="1"/></svg>
<svg style="left:953px;top:573px" width="9" height="9" viewBox="0 0 9 9"><g fill="#BDBDBD"><rect x="6.500" y="0.300" width="2" height="2"/><rect x="3.400" y="3.300" width="2" height="2"/><rect x="6.500" y="3.300" width="2" height="2"/><rect x="0.300" y="6.300" width="2" height="2"/><rect x="3.400" y="6.300" width="2" height="2"/><rect x="6.500" y="6.300" width="2" height="2"/></g></svg>
<svg style="left:251.5px;top:227px" width="7" height="5" viewBox="0 0 7 5"><path d="M0.500 4.500l3-3.500 3 3.500" stroke="#606060" stroke-width="1.300" fill="none"/></svg>
<svg style="left:251.5px;top:518.5px" width="7" height="5" viewBox="0 0 7 5"><path d="M0.500 0.500l3 3.500 3-3.500" stroke="#606060" stroke-width="1.300" fill="none"/></svg>
<svg style="left:62px;top:224.0px" width="6" height="9" viewBox="0 0 6 9"><path d="M0.500 0.800v7.400L4.800 4.500z" stroke="#5A5A5A" stroke-width="0.900" fill="#F6F6F6"/></svg>
<svg style="left:62px;top:240.0px" width="6" height="9" viewBox="0 0 6 9"><path d="M0.500 0.800v7.400L4.800 4.500z" stroke="#5A5A5A" stroke-width="0.900" fill="#F6F6F6"/></svg>
<svg style="left:62px;top:256.0px" width="6" height="9" viewBox="0 0 6 9"><path d="M0.500 0.800v7.400L4.800 4.500z" stroke="#5A5A5A" stroke-width="0.900" fill="#F6F6F6"/></svg>
<svg style="left:62px;top:272.0px" width="6" height="9" viewBox="0 0 6 9"><path d="M0.500 0.800v7.400L4.800 4.500z" stroke="#5A5A5A" stroke-width="0.900" fill="#F6F6F6"/></svg>
<svg style="left:61px;top:288.8px" width="7" height="7" viewBox="0 0 7 7"><path d="M6 0.300v5.700H0.300z" fill="#262626"/></svg>
<svg style="left:71.5px;top:336.0px" width="6" height="9" viewBox="0 0 6 9"><path d="M0.500 0.800v7.400L4.800 4.500z" stroke="#5A5A5A" stroke-width="0.900" fill="#F6F6F6"/></svg>
<svg style="left:71.5px;top:352.0px" width="6" height="9" viewBox="0 0 6 9"><path d="M0.500 0.800v7.400L4.800 4.500z" stroke="#5A5A5A" stroke-width="0.900" fill="#F6F6F6"/></svg>
<svg style="left:70.5px;top:368.8px" width="7" height="7" viewBox="0 0 7 7"><path d="M6 0.300v5.700H0.300z" fill="#262626"/></svg>
<svg style="left:80px;top:448.8px" width="7" height="7" viewBox="0 0 7 7"><path d="M6 0.300v5.700H0.300z" fill="#262626"/></svg>
<svg style="left:90.5px;top:480.0px" width="6" height="9" viewBox="0 0 6 9"><path d="M0.500 0.800v7.400L4.800 4.500z" stroke="#5A5A5A" stroke-width="0.900" fill="#F6F6F6"/></svg>
<div style="left:58px;top:525px;width:40px;height:5px;overflow:hidden"><svg style="left:13.500px;top:3px" width="6" height="9" viewBox="0 0 6 9"><path d="M0.500 0.800v7.400L4.800 4.500z" stroke="#5A5A5A" stroke-width="0.900" fill="#F6F6F6"/></svg></div>
<svg style="left:411px;top:302px" width="16" height="16" viewBox="0 0 16 16"><path d="M1.500 1.500L14 14.500" stroke="#1A1A1A" stroke-width="0.900"/></svg>
</body></html>
